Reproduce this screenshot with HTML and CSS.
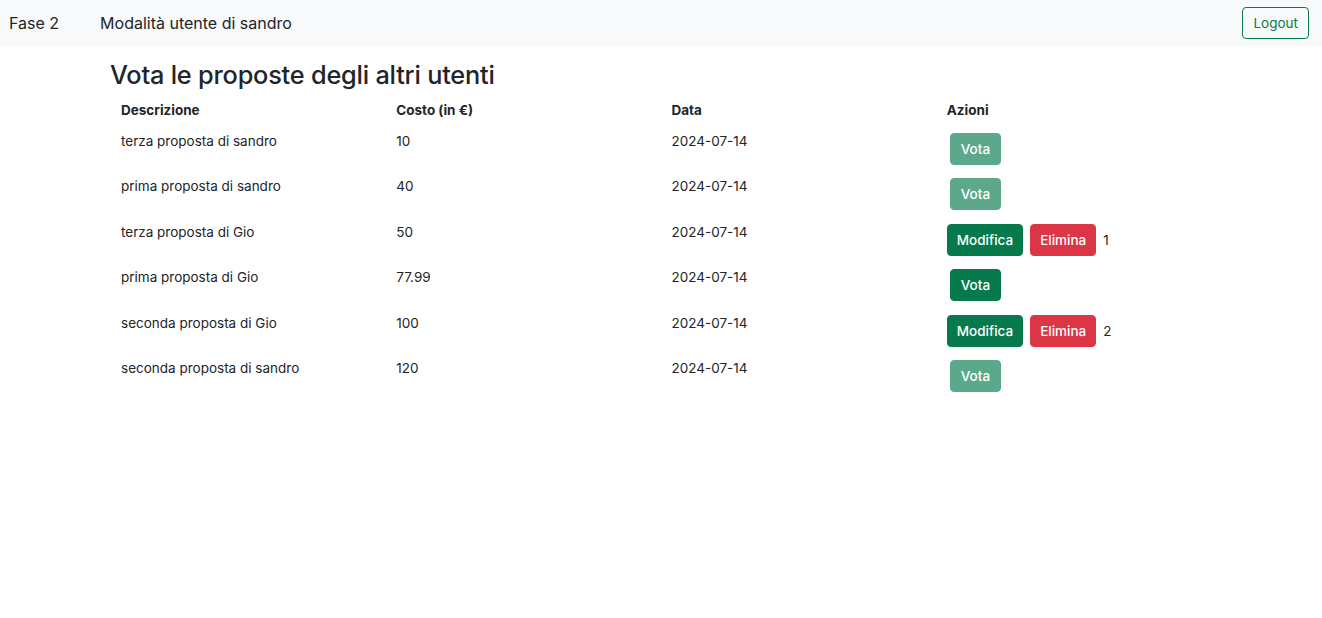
FILE: index.html
```html
<!DOCTYPE html>
<html lang="it">
<head>
<meta charset="utf-8">
<title>Fase 2</title>
<link rel="stylesheet" href="styles.css">
</head>
<body>
<nav class="navbar">
  <span class="brand">Fase 2</span>
  <span class="mode">Modalità utente di sandro</span>
  <button class="btn btn-outline">Logout</button>
</nav>
<main class="container">
  <h3 class="title">Vota le proposte degli altri utenti</h3>
  <table class="table">
    <thead>
      <tr><th>Descrizione</th><th>Costo (in €)</th><th>Data</th><th>Azioni</th></tr>
    </thead>
    <tbody>
      <tr><td>terza proposta di sandro</td><td>10</td><td>2024-07-14</td><td><div class="actions"><button class="btn btn-success btn-vote" disabled>Vota</button></div></td></tr>
      <tr><td>prima proposta di sandro</td><td>40</td><td>2024-07-14</td><td><div class="actions"><button class="btn btn-success btn-vote" disabled>Vota</button></div></td></tr>
      <tr><td>terza proposta di Gio</td><td>50</td><td>2024-07-14</td><td><div class="actions"><button class="btn btn-success">Modifica</button><button class="btn btn-danger">Elimina</button><span class="count">1</span></div></td></tr>
      <tr><td>prima proposta di Gio</td><td>77.99</td><td>2024-07-14</td><td><div class="actions"><button class="btn btn-success btn-vote">Vota</button></div></td></tr>
      <tr><td>seconda proposta di Gio</td><td>100</td><td>2024-07-14</td><td><div class="actions"><button class="btn btn-success">Modifica</button><button class="btn btn-danger">Elimina</button><span class="count">2</span></div></td></tr>
      <tr><td>seconda proposta di sandro</td><td>120</td><td>2024-07-14</td><td><div class="actions"><button class="btn btn-success btn-vote" disabled>Vota</button></div></td></tr>
    </tbody>
  </table>
</main>
</body>
</html>
```
FILE: styles.css
```css
* { box-sizing: border-box; }
body {
  margin: 0;
  font-family: Inter, "Noto Sans", sans-serif;
  color: #212529;
  background: #fff;
}
.navbar {
  display: flex;
  align-items: center;
  height: 46px;
  padding: 0 13px 0 9px;
  background: #f8f9fa;
}
.brand {
  font-size: 16px;
  margin-right: 41px;
}
.mode {
  font-size: 16px;
  flex: 1;
}
.btn {
  font-family: inherit;
  font-size: 13.5px;
  font-weight: 500;
  line-height: 20px;
  padding: 5px 9px;
  border-radius: 4px;
  border: 1px solid transparent;
  cursor: pointer;
  color: #fff;
}
.btn-outline {
  background: transparent;
  border-color: #067a4c;
  color: #067a4c;
  font-weight: 400;
  padding: 5px 10px;
}
.container {
  padding: 0 108px 0 110px;
}
.title {
  font-size: 25.3px;
  font-weight: 500;
  margin: 13px 0 12px;
  letter-spacing: -0.2px;
}
.table {
  width: 1101px;
  border-collapse: collapse;
  margin-left: 3px;
  font-size: 13.5px;
  table-layout: fixed;
}
.table th {
  text-align: left;
  font-weight: 700;
  padding: 0 8px 9px;
  height: 25px;
  vertical-align: top;
}
.table td {
  padding: 0 8px;
  height: 45.4px;
  vertical-align: top;
}
.table td:not(:last-child) {
  padding-top: 6px;
}
.actions {
  display: flex;
  align-items: center;
  gap: 7px;
  padding-top: 6px;
}
.btn-success { background: #067a4c; border-color: #067a4c; }
.btn-danger { background: #dc3545; border-color: #dc3545; }
.btn-vote { margin-left: 3px; padding: 5px 10px; }
.btn-vote:disabled { opacity: 0.65; cursor: default; }
.count { margin-left: 0; }
```
